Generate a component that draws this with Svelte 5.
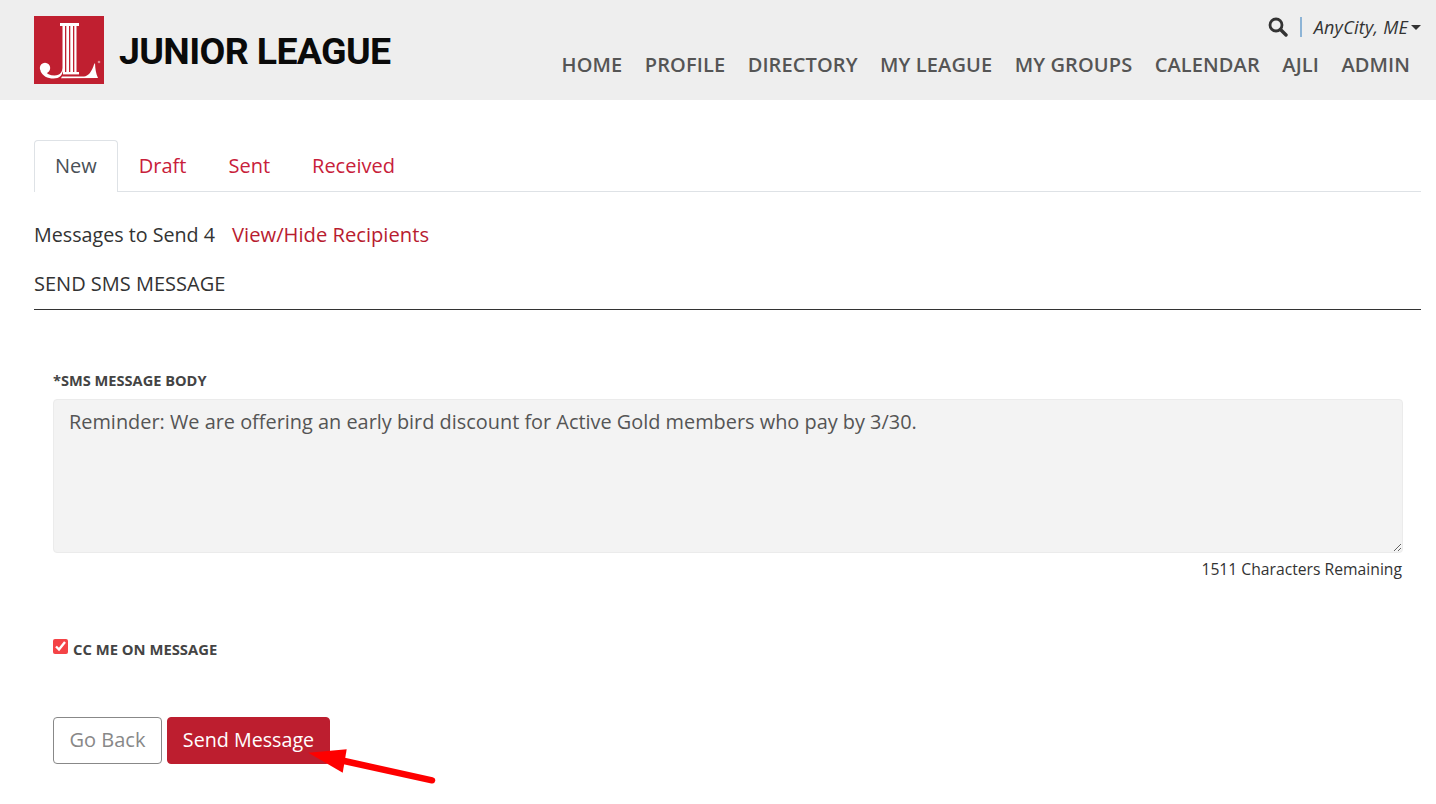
<script>
  const nav = ['HOME', 'PROFILE', 'DIRECTORY', 'MY LEAGUE', 'MY GROUPS', 'CALENDAR', 'AJLI', 'ADMIN'];
  const tabs = ['Draft', 'Sent', 'Received'];
  const body = 'Reminder: We are offering an early bird discount for Active Gold members who pay by 3/30.';
</script>

<header class="header">
  <a class="brand" href="#home">
    <svg class="mark" viewBox="0 0 70 68" width="70" height="68" aria-hidden="true">
      <rect width="70" height="68" fill="#c01f30" />
      <g fill="#fff">
        <rect x="26" y="7" width="19" height="3" />
        <rect x="28.5" y="10" width="14" height="46" />
        <rect x="29" y="56" width="16" height="2.4" />
        <circle cx="11" cy="52" r="5.2" />
        <path d="M6.5 55c2 5 7 7.5 13 7.5 6 0 9-3 9.5-9l.5-4c-1 6-3 10-9 10-4.5 0-8-1.500-10-5z" />
        <path d="M28 60.5h22c4 0 8-5 10-12l1-1.500c.2 6 1 11 3 15l-37 .2z" />
      </g>
      <g fill="#c01f30">
        <rect x="31" y="10" width="1.3" height="46" />
        <rect x="35" y="10" width="1.3" height="46" />
        <rect x="39" y="10" width="1.3" height="46" />
      </g>
      <circle cx="65" cy="46" r="1.3" fill="#e08a93" />
    </svg>
    <span class="wordmark">JUNIOR LEAGUE</span>
  </a>

  <div class="header-right">
    <div class="utility">
      <svg class="search" viewBox="0 0 20 20" width="20" height="20" aria-hidden="true">
        <circle cx="8" cy="8" r="6" fill="none" stroke="#333" stroke-width="2.8" />
        <path d="M12.5 12.5 18 18" stroke="#333" stroke-width="3.4" stroke-linecap="round" />
      </svg>
      <span class="divider"></span>
      <span class="city">AnyCity, ME</span>
      <span class="caret"></span>
    </div>
    <nav class="nav">
      {#each nav as item}
        <a href="#nav">{item}</a>
      {/each}
    </nav>
  </div>
</header>

<main class="main">
  <div class="tabs">
    <a class="tab active" href="#new">New</a>
    {#each tabs as tab}
      <a class="tab" href="#tab">{tab}</a>
    {/each}
  </div>

  <div class="recipients">
    <span class="count">Messages to Send 4</span>
    <a href="#recipients">View/Hide Recipients</a>
  </div>

  <h1 class="title">SEND SMS MESSAGE</h1>

  <form class="form">
    <label class="label" for="sms">*SMS MESSAGE BODY</label>
    <textarea id="sms" readonly value={body}></textarea>
    <div class="remaining">1511 Characters Remaining</div>

    <label class="check">
      <input type="checkbox" checked />
      <span>CC ME ON MESSAGE</span>
    </label>

    <div class="actions">
      <button type="button" class="btn back">Go Back</button>
      <div class="send-wrap">
        <button type="button" class="btn send">Send Message</button>
        <svg class="arrow" viewBox="0 0 130 40" width="130" height="40" aria-hidden="true">
          <path d="M.3 4.7 38.7 1.3 34.7 24.7z" fill="#fe0000" />
          <path d="M34 12.5 124 32.3" stroke="#fe0000" stroke-width="6.5" stroke-linecap="round" fill="none" />
        </svg>
      </div>
    </div>
  </form>
</main>

<style>
  :global(body) {
    margin: 0;
    background: #fff;
    font-family: "Open Sans", Lato, sans-serif;
    color: #333;
  }

  a {
    text-decoration: none;
  }

  .header {
    height: 100px;
    box-sizing: border-box;
    background: #eee;
    padding: 16px 15px 0 34px;
    display: flex;
    justify-content: space-between;
  }

  .brand {
    display: flex;
    align-items: flex-start;
    gap: 15px;
  }

  .mark {
    display: block;
  }

  .wordmark {
    font-family: Roboto, sans-serif;
    font-weight: 700;
    font-size: 37.5px;
    line-height: 70px;
    color: #0a0a0a;
    letter-spacing: -0.65px;
    white-space: nowrap;
  }

  .header-right {
    display: flex;
    flex-direction: column;
    align-items: flex-end;
  }

  .utility {
    display: flex;
    align-items: center;
    height: 22px;
  }

  .search {
    display: block;
  }

  .divider {
    width: 2px;
    height: 20px;
    background: #8db4d6;
    margin: 0 12px;
  }

  .city {
    font-style: italic;
    font-size: 18px;
    letter-spacing: 0.25px;
    color: #333;
  }

  .caret {
    margin-left: 3px;
    border-top: 5px solid #333;
    border-left: 5px solid transparent;
    border-right: 5px solid transparent;
  }

  .nav {
    display: flex;
    gap: 22.5px;
    margin-top: 14px;
    padding-right: 11px;
  }

  .nav a {
    font-size: 20px;
    line-height: 26px;
    font-weight: 600;
    letter-spacing: 0.1px;
    color: #555;
    white-space: nowrap;
  }

  .main {
    padding: 40px 15px 0 34px;
    min-height: 704px;
    box-sizing: border-box;
  }

  .tabs {
    display: flex;
    height: 52px;
    box-sizing: border-box;
    border-bottom: 1px solid #dee2e6;
  }

  .tab {
    height: 52px;
    box-sizing: border-box;
    padding: 0 20px;
    line-height: 50px;
    font-size: 20px;
    color: #c8203a;
    border: 1px solid transparent;
    border-bottom: 0;
    border-radius: 4px 4px 0 0;
  }

  .tab.active {
    color: #495057;
    background: #fff;
    border-color: #dee2e6;
  }

  .recipients {
    display: flex;
    align-items: baseline;
    gap: 17px;
    height: 26px;
    margin-top: 29px;
    font-size: 20.2px;
    line-height: 26px;
    color: #333;
  }

  .count {
    font-size: 19.7px;
  }

  .recipients a {
    color: #b81c30;
  }

  .title {
    margin: 24px 0 0;
    padding-bottom: 12px;
    border-bottom: 1px solid #333;
    font-size: 20px;
    line-height: 26px;
    font-weight: 400;
    color: #333;
  }

  .form {
    padding: 62px 18px 0 19px;
  }

  .label {
    display: block;
    font-size: 14.6px;
    line-height: 16px;
    padding-bottom: 3px;
    font-weight: 700;
    color: #444;
  }

  textarea {
    display: block;
    width: 100%;
    height: 154px;
    margin-top: 8px;
    box-sizing: border-box;
    padding: 9px 15px;
    background: #f3f3f3;
    border: 1px solid #ebebeb;
    border-radius: 4px;
    font-family: inherit;
    font-size: 19.9px;
    line-height: 26px;
    color: #555;
    outline: none;
  }

  .remaining {
    margin-top: 6px;
    padding-right: 1px;
    text-align: right;
    font-size: 15.7px;
    line-height: 20px;
    color: #333;
  }

  .check {
    display: flex;
    align-items: flex-start;
    gap: 5px;
    margin-top: 60px;
    font-size: 14.8px;
    line-height: 20px;
    font-weight: 700;
    color: #444;
  }

  .check input {
    width: 15px;
    height: 15px;
    margin: 0;
    accent-color: #f44346;
  }

  .actions {
    display: flex;
    gap: 5px;
    margin-top: 58px;
  }

  .btn {
    height: 47px;
    box-sizing: border-box;
    padding: 0 0 2px;
    border-radius: 4px;
    font-family: inherit;
    font-size: 20px;
  }

  .back {
    width: 109px;
    background: #fff;
    border: 1px solid #888;
    color: #888;
  }

  .send-wrap {
    position: relative;
  }

  .send {
    width: 163px;
    background: #bd1e2f;
    border: 1px solid #bd1e2f;
    color: #fff;
    font-size: 19.7px;
    font-weight: 500;
  }

  .arrow {
    position: absolute;
    left: 141px;
    top: 31px;
    overflow: visible;
  }
</style>
